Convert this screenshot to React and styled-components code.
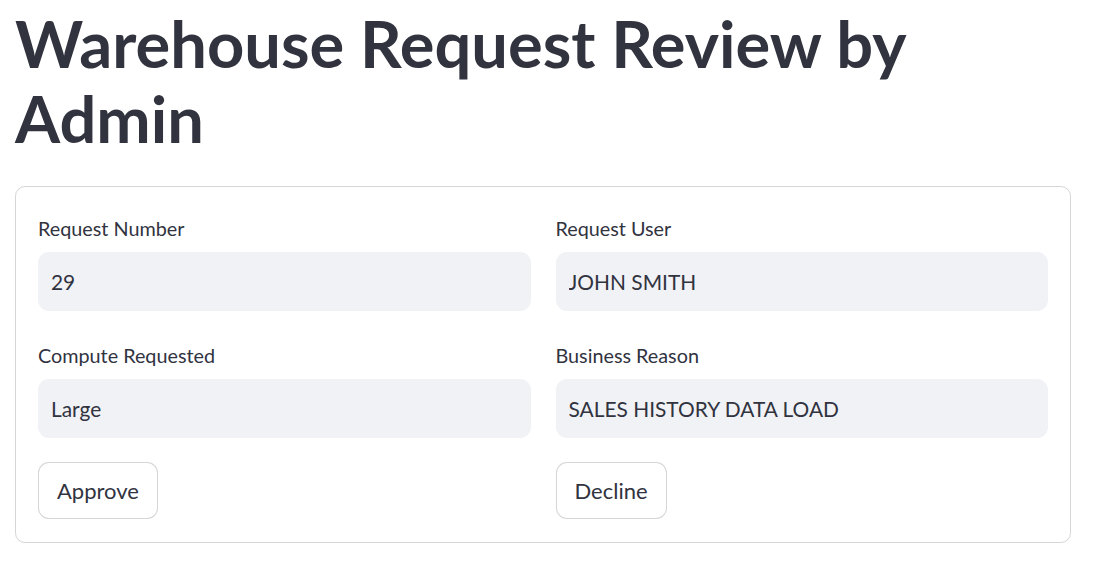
import React from "react";
import styled, { createGlobalStyle } from "styled-components";

const GlobalStyle = createGlobalStyle`
    body {
        margin: 0;
        background: #ffffff;
        font-family: Lato, "Liberation Sans", sans-serif;
        color: #31333f;
    }
`

const Page = styled.div`
    width: 1056px;
    padding: 0 0 0 15px;
`

const Title = styled.h1`
    margin: 0;
    padding: 6px 0 30px 0;
    font-size: 65px;
    font-weight: 700;
    line-height: 75px;
    color: #31333f;
`

const Card = styled.div`
    display: grid;
    grid-template-columns: 1fr 1fr;
    column-gap: 25px;
    row-gap: 24px;
    padding: 21px 22px 23px 22px;
    border: 1px solid rgba(49, 51, 63, 0.2);
    border-radius: 10px;
`

const Field = styled.div`
    display: flex;
    flex-direction: column;
    gap: 10px;
    padding-top: 6px;
`

const Label = styled.label`
    font-size: 19.8px;
    line-height: 28px;
    color: #31333f;
`

const Input = styled.input`
    box-sizing: border-box;
    width: 100%;
    height: 59px;
    padding: 0 13px;
    border: none;
    border-radius: 11px;
    background: #f0f2f6;
    font-family: inherit;
    font-size: 20.9px;
    color: #31333f;
    outline: none;
`

const Button = styled.button`
    justify-self: start;
    height: 57px;
    padding: 0 18px;
    background: #ffffff;
    border: 1px solid rgba(49, 51, 63, 0.2);
    border-radius: 11px;
    font-family: inherit;
    font-size: 22px;
    color: #31333f;
    cursor: pointer;
`

const fields = [
    { label: "Request Number", value: "29" },
    { label: "Request User", value: "JOHN SMITH" },
    { label: "Compute Requested", value: "Large" },
    { label: "Business Reason", value: "SALES HISTORY DATA LOAD" },
]

export default function App() {
    return (
        <Page>
            <GlobalStyle />
            <Title>Warehouse Request Review by Admin</Title>
            <Card>
                {fields.map(f => (
                    <Field key={f.label}>
                        <Label>{f.label}</Label>
                        <Input readOnly value={f.value} />
                    </Field>
                ))}
                <Button>Approve</Button>
                <Button>Decline</Button>
            </Card>
        </Page>
    )
}
